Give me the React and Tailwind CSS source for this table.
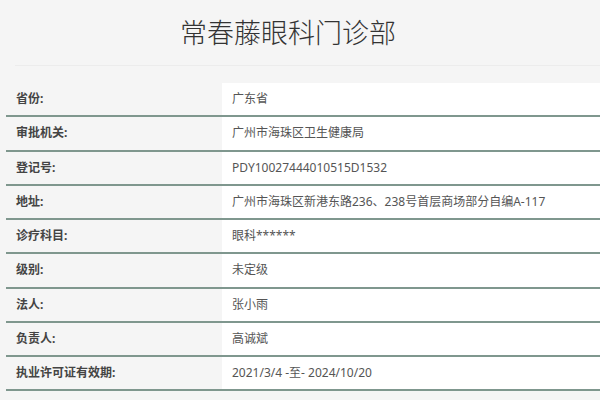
import React from "react";

const rows = [
  { label: "省份:", value: "广东省" },
  { label: "审批机关:", value: "广州市海珠区卫生健康局" },
  { label: "登记号:", value: "PDY10027444010515D1532" },
  { label: "地址:", value: "广州市海珠区新港东路236、238号首层商场部分自编A-117" },
  { label: "诊疗科目:", value: "眼科******" },
  { label: "级别:", value: "未定级" },
  { label: "法人:", value: "张小雨" },
  { label: "负责人:", value: "高诚斌" },
  { label: "执业许可证有效期:", value: "2021/3/4 -至- 2024/10/20" },
];

function App() {
  return (
    <div
      className="w-[600px] h-[400px] overflow-hidden bg-[#f5f5f5]"
      style={{ fontFamily: '"Noto Sans", "Noto Sans CJK SC", sans-serif' }}
    >
      <div className="h-[66px] flex items-center pl-[165px] border-b border-[#ececec] ml-[15px]">
        <h1 className="text-[27px] leading-none font-light text-[#333]">常春藤眼科门诊部</h1>
      </div>
      <div className="mt-[17px] ml-[6px]">
        {rows.map((row, index) => (
          <div
            key={index}
            className="flex h-[34.25px] border-b-2 border-[#7f978e]"
          >
            <div className="w-[216px] flex items-center pl-[10px] text-[12px] font-bold text-[#444]">
              {row.label}
            </div>
            <div className="flex-1 flex items-center bg-white pl-[10px] text-[12px] text-[#555]">
              {row.value}
            </div>
          </div>
        ))}
      </div>
    </div>
  );
}

export default App;
